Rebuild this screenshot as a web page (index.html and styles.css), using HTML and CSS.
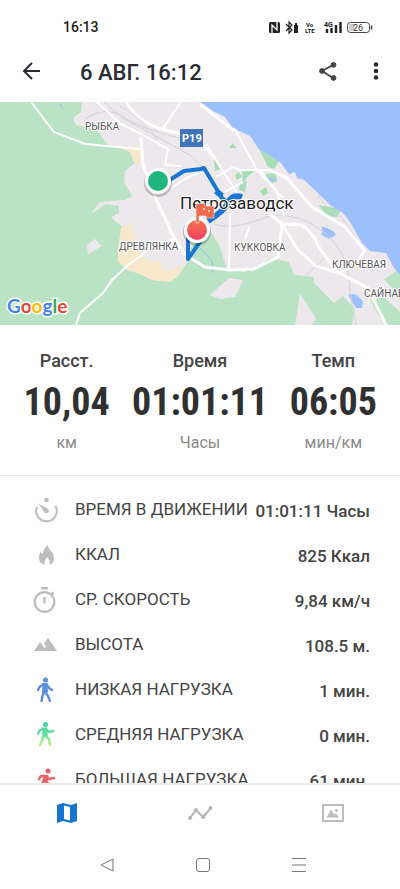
FILE: index.html
```html
<!DOCTYPE html>
<html lang="ru">
<head>
    <meta charset="UTF-8">
    <meta name="viewport" content="width=device-width, initial-scale=1.0">
    <title>Тренировка</title>
    <link rel="stylesheet" href="styles.css">
</head>
<body>

<div class="app">
    <div class="status-bar">
        <span class="clock">16:13</span>
        <svg class="status-icons" width="106" height="16" viewBox="0 0 106 16">
            <!-- nfc -->
            <rect x="1" y="3" width="11" height="11" rx="1.5" fill="#222"/>
            <path d="M4 14V6l5 5V3" fill="none" stroke="#fff" stroke-width="1.3"/>
            <!-- bluetooth -->
            <path d="M18 5l6 6-3 3V3l3 3-6 6" fill="none" stroke="#222" stroke-width="1.2"/>
            <path d="M26 6h1V4h2v2h1v8h-4z" fill="#222"/>
            <text x="38" y="8" class="status-tiny">Vo</text>
            <text x="37" y="14" class="status-tiny">LTE</text>
            <text x="56" y="8" class="status-net">4G</text>
            <path d="M59 14v-4M63.5 14V9M68 14V6M72.5 14V3" stroke="#222" stroke-width="2.4"/>
            <!-- battery -->
            <rect x="79.5" y="3.5" width="22" height="10" rx="3" fill="#fff" stroke="#444"/>
            <path d="M81 6q0-1 1-1h4v7h-4q-1 0-1-1z" fill="#ccc"/>
            <path d="M103.5 6.5v4" stroke="#444" stroke-width="1.5"/>
            <text x="85" y="12" class="status-battery">26</text>
        </svg>
    </div>

    <header class="toolbar">
        <button class="icon-btn" aria-label="Назад">
            <svg width="20" height="20" viewBox="0 0 20 20" fill="none" stroke="#2b2b33" stroke-width="2">
                <path d="M19 9H3M11 1L3 9l8 8"/>
            </svg>
        </button>
        <h1 class="title">6 АВГ. 16:12</h1>
        <button class="icon-btn" aria-label="Поделиться">
            <svg width="20" height="20" viewBox="0 0 20 20" fill="#444" stroke="#444">
                <path d="M15 3L4 9l11 7" fill="none" stroke-width="1.8"/>
                <circle cx="15.5" cy="2.9" r="2.4"/>
                <circle cx="4" cy="9" r="2.4"/>
                <circle cx="15.5" cy="16" r="2.4"/>
            </svg>
        </button>
        <button class="icon-btn more" aria-label="Ещё">
            <svg width="6" height="20" viewBox="0 0 6 20" fill="#2b2b33">
                <circle cx="3" cy="2.5" r="2.3"/>
                <circle cx="3" cy="9" r="2.3"/>
                <circle cx="3" cy="15.5" r="2.3"/>
            </svg>
        </button>
    </header>

    <svg class="map" viewBox="0 102 400 223">
        <defs>
            <linearGradient id="finish" x1="0" y1="0" x2="0" y2="1">
                <stop offset="0" stop-color="#f4734a"/>
                <stop offset="1" stop-color="#ee3f62"/>
            </linearGradient>
        </defs>
        <rect y="102" width="400" height="223" fill="#ece8ec"/>

        <!-- forest -->
        <g fill="#bae3c6">
            <path d="M0 102H82L81 112 73 118 76 125 97 130 108 145 120 148 132 153 136 162 125 171 124 182 132 196 125 200 100 202 91 214 106 204 119 206 119 213 111 217 123 228 121 240 118 250 119 262 128 270 140 274 152 280 170 282 180 274 187 262 213 268 245 272 257 266 271 258 289 262 294 275 314 277 314 283 334 303 343 296 355 309 352 325H0z"/>
            <path d="M196 232L210 230 220 247 227 270 187 264zM370 300L384 297 400 312V325H384zM384 279L397 271 400 275V296zM320 212L337 212 332 217z"/>
        </g>
        <g fill="#f7e8cc">
            <path d="M118 147L141 147 141 160 139 167 134 162 130 152zM121 228L131 223 134 232 137 246 142 256 153 262 153 280 140 274 128 270 118 262 118 250zM153 262L160 260 165 271 184 265 178 276 170 282 153 280z"/>
        </g>
        <path d="M87 245L95 239 102 246 88 254zM300 293L316 319 312 325H295zM210 295L229 278 243 280 235 297 220 299z" fill="#ece8ec"/>
        <g fill="#a9ddb8">
            <path d="M259 149L279 161 274 169 268 167zM229 148L233 143 236 148zM214 158L220 169 215 171zM242 171L256 170 247 177 243 185zM266 174L276 173 277 181 269 185 265 180zM240 184L247 181 245 192 239 190zM260 191L266 187 268 193 263 196zM235 175L239 172 242 177 237 180zM318 205L342 209 337 217 328 216z"/>
        </g>

        <!-- water -->
        <g fill="#9cc0fd">
            <path d="M200 102L213 111 225 117 233 128 250 136 259 149 272 157 281 163 289 174 295 172 297 178 304 180 318 193 330 205 343 213 350 222 362 243 370 251 386 253 394 268 400 275V102z"/>
            <path d="M322 227L327 228 333 231 336 235 329 239 322 235zM348 295Q356 291 363 302L362 308 356 308zM265 177L272 178 277 181 270 181z"/>
        </g>
        <path d="M60 104l3 5M199 247l13 14 1 12" fill="none" stroke="#8cc2e8"/>

        <!-- minor roads -->
        <g fill="none" stroke="#d5d2d9" stroke-width="1">
            <path d="M85 119Q110 104 124 119L152 134 190 155 205 170M104 102Q130 128 181 138M120 106Q146 122 158 140M214 224Q232 231 270 216 300 212 325 233T350 292L356 325M318 194Q327 211 342 218L364 250M181 150L190 137M306 275l20-18"/>
        </g>
        <!-- roads -->
        <g fill="none" stroke="#fff" stroke-width="2">
            <path d="M31 102L54 132 85 144 118 147 141 149M181 102L163 128M97 102L121 124 141 134 168 149 165 165 181 166M173 187Q190 174 202 173M206 144L240 198M216 177L233 167 240 170 270 170M225 192L243 182M234 128L257 170M257 170L283 198M76 325L80 313 103 293 112 280 128 265 149 250 175 238M230 213L229 271M261 171L276 190 284 216M245 239L250 226"/>
        </g>
        <g fill="none" stroke="#fff" stroke-width="3">
            <path d="M126 102Q140 124 165 130L195 137 214 157M141 137L143 165 156 199 173 236 185 255 205 267 229 270 254 269 278 257 282 224 270 214 282 224 302 225Q315 235 318 246L337 272M200 104L234 131M270 170L287 178 312 207 345 227 365 251M282 224L298 250 316 266 339 273 368 288 386 325M365 250L356 265 339 273"/>
        </g>

        <g class="places">
            <text x="85" y="130">РЫБКА</text>
            <text x="119" y="250">ДРЕВЛЯНКА</text>
            <text x="234" y="251">КУККОВКА</text>
            <text x="332" y="268">КЛЮЧЕВАЯ</text>
            <text x="364" y="297">САЙНАВОЛОК</text>
        </g>

        <!-- highway badge -->
        <rect x="180" y="129" width="23" height="18" fill="#3f76bb"/>
        <text x="182" y="142" class="badge">P19</text>

        <!-- route -->
        <g fill="none" stroke="#1976d2" stroke-linejoin="round">
            <path d="M168 181L184 171 201 169 204 168 222 198 228 203M188 237V259L202 239" stroke-width="4"/>
            <path d="M228 203Q232 194 242 197M216 191l6 5M228 203Q224 211 208 221" stroke-width="6"/>
        </g>
        <text x="180" y="209" class="city">Петрозаводск</text>

        <circle cx="158" cy="183" r="14" fill="#000" opacity=".2"/>
        <circle cx="158" cy="181" r="13" fill="#fff"/>
        <circle cx="158" cy="181" r="10" fill="#1fb57c"/>
        <circle cx="197" cy="232" r="14" fill="#000" opacity=".2"/>
        <circle cx="197" cy="230" r="13" fill="#fff"/>
        <circle cx="197" cy="230" r="10" fill="url(#finish)"/>
        <path d="M196 204L205 203 205 206 214 206V218H206V216H199V223H196z" fill="#ef6b4c" stroke="#fff" stroke-opacity=".5" stroke-width="1"/>
        <path d="M203 208h2v2h-2zM208 210h2v2h-2z" fill="#fbd0c0"/>

        <text x="7" y="313" class="google"><tspan fill="#4285f4">G</tspan><tspan fill="#ea4335">o</tspan><tspan fill="#fbbc05">o</tspan><tspan fill="#4285f4">g</tspan><tspan fill="#34a853">l</tspan><tspan fill="#ea4335">e</tspan></text>
    </svg>

    <section class="summary">
        <div class="metric">
            <span class="metric-name">Расст.</span>
            <span class="metric-value">10,04</span>
            <span class="metric-unit">км</span>
        </div>
        <div class="metric">
            <span class="metric-name">Время</span>
            <span class="metric-value">01:01:11</span>
            <span class="metric-unit">Часы</span>
        </div>
        <div class="metric">
            <span class="metric-name">Темп</span>
            <span class="metric-value">06:05</span>
            <span class="metric-unit">мин/км</span>
        </div>
    </section>

    <ul class="details">
        <li class="row">
            <svg class="row-icon" viewBox="0 0 26 28">
                <path d="M5 12A10.300 10.300 0 1 0 23.500 11" fill="none" stroke="#bdbdbd" stroke-width="2"/>
                <circle cx="14.500" cy="5" r="2.300"/>
                <path d="M6.500 8.500L16 14q2 2 0 3.500t-3.500 0z"/>
            </svg>
            <span class="row-name">ВРЕМЯ В ДВИЖЕНИИ</span>
            <span class="row-value">01:01:11 Часы</span>
        </li>
        <li class="row">
            <svg class="row-icon" viewBox="0 0 26 28">
                <path d="M16 5c-.5 4 6 7 6 13 0 4-2 6-5 7 2-3 0-5-2-8-1 3-4 5-2 8-4-1-6-4-6-7 0-3 1-5 2-7 0 2 1 3 2 3 0-4 2-7 5-9z"/>
            </svg>
            <span class="row-name">ККАЛ</span>
            <span class="row-value">825 Ккал</span>
        </li>
        <li class="row">
            <svg class="row-icon" viewBox="0 0 26 28">
                <circle cx="12.500" cy="17" r="9.800" fill="none" stroke="#bdbdbd" stroke-width="2.200"/>
                <path d="M9 2h7v2.500H9zM11.300 12h2.400v6.500h-2.400zM18.500 8.500l2-2 2 2-2 2z"/>
            </svg>
            <span class="row-name">СР. СКОРОСТЬ</span>
            <span class="row-value">9,84 км/ч</span>
        </li>
        <li class="row">
            <svg class="row-icon" viewBox="0 0 26 28">
                <path d="M2 21L8 12l3 4 1.500 2 1.500-1-2-3.500L16 8l9 13z"/>
            </svg>
            <span class="row-name">ВЫСОТА</span>
            <span class="row-value">108.5 м.</span>
        </li>
        <li class="row">
            <svg class="row-icon low" viewBox="0 0 26 28">
                <circle cx="13.500" cy="5" r="2.500"/>
                <path d="M11 9.500L7.500 12 6 15M15 10l2 3 3 2M11.500 17l-1 4L9.500 26M13 17l3 4 2 5" class="limb"/>
                <path d="M10.500 8h5l.5 9.500h-6z"/>
            </svg>
            <span class="row-name">НИЗКАЯ НАГРУЗКА</span>
            <span class="row-value">1 мин.</span>
        </li>
        <li class="row">
            <svg class="row-icon" viewBox="0 0 26 28">
                <defs>
                    <linearGradient id="mid" x1="0" y1="2" x2="0" y2="26" gradientUnits="userSpaceOnUse">
                        <stop offset="0" stop-color="#3fd39a"/>
                        <stop offset=".5" stop-color="#6bdca5"/>
                        <stop offset="1" stop-color="#c5f07a"/>
                    </linearGradient>
                </defs>
                <circle cx="13.500" cy="4.500" r="2.500" fill="url(#mid)"/>
                <path d="M11 9L7.500 10.500 6 14M14 9l3 3 4-1M11 16l-1 5-2 4M13 16l4 3 1 6" class="limb" stroke="url(#mid)"/>
                <path d="M10.500 7.500h4.500l1 9.500h-6z" fill="url(#mid)"/>
            </svg>
            <span class="row-name">СРЕДНЯЯ НАГРУЗКА</span>
            <span class="row-value">0 мин.</span>
        </li>
        <li class="row">
            <svg class="row-icon high" viewBox="0 0 26 28">
                <circle cx="16" cy="6" r="2.500"/>
                <path d="M13 11H9l-2 3M15 12l2 2 5-1M12 16l-3 4H5M13 16l4 3-1 5" class="limb"/>
                <path d="M12 10h4l1 4-3 4-4-2z"/>
            </svg>
            <span class="row-name">БОЛЬШАЯ НАГРУЗКА</span>
            <span class="row-value">61 мин.</span>
        </li>
    </ul>

    <nav class="tabs">
        <button class="tab" aria-label="Карта">
            <svg width="22" height="22" viewBox="0 0 22 22">
                <path d="M1 3L7 1l8 2 6-2v18l-6 2-8-2-6 2z" fill="#1673d1"/>
                <path d="M8 3.500l6 1.500v13.500L8 17z" fill="#fff"/>
            </svg>
        </button>
        <button class="tab" aria-label="Графики">
            <svg width="26" height="16" viewBox="0 0 26 16" fill="#b5b5b5">
                <path d="M3 13L9 5l7 7 8-9" fill="none" stroke="#b5b5b5" stroke-width="2"/>
                <circle cx="3" cy="13" r="2"/>
                <circle cx="9" cy="5" r="2"/>
                <circle cx="16" cy="12" r="2"/>
                <circle cx="23.500" cy="3" r="2"/>
            </svg>
        </button>
        <button class="tab" aria-label="Фото">
            <svg width="22" height="18" viewBox="0 0 22 18" fill="#bdbdbd">
                <rect x="1" y="1" width="20" height="16" fill="none" stroke="#bdbdbd" stroke-width="2"/>
                <path d="M4.500 13.500L9 5.500l3 5 2-1.500 3 4.500z"/>
                <circle cx="14.500" cy="6.500" r="1.500"/>
            </svg>
        </button>
    </nav>

    <div class="system-nav">
        <button class="icon-btn" aria-label="Назад">
            <svg width="14" height="14" viewBox="0 0 14 14" fill="none" stroke="#777">
                <path d="M13 1v12L1 7z" stroke-linejoin="round"/>
            </svg>
        </button>
        <button class="icon-btn" aria-label="Домой">
            <svg width="14" height="14" viewBox="0 0 14 14" fill="none" stroke="#777">
                <rect x=".5" y=".5" width="13" height="13" rx="2.500"/>
            </svg>
        </button>
        <button class="icon-btn" aria-label="Недавние">
            <svg width="14" height="14" viewBox="0 0 14 14" fill="none" stroke="#777">
                <path d="M0 .5h14M0 7h14M0 13.500h14"/>
            </svg>
        </button>
    </div>
</div>

</body>
</html>
```
FILE: styles.css
```css
* {
    box-sizing: border-box;
}
body {
    margin: 0;
    font-family: Roboto, "Noto Sans", sans-serif;
    background-color: #fefefe;
    color: #444;
}
button {
    padding: 0;
    background: none;
    border: none;
    cursor: pointer;
}
svg {
    display: block;
}
.app {
    display: flex;
    flex-direction: column;
    height: 100vh;
}

/* top */
.status-bar {
    display: flex;
    justify-content: space-between;
    align-items: center;
    height: 42px;
    padding: 12px 26px 0 63px;
}
.clock {
    font-size: 14px;
    font-weight: 500;
    color: #222;
}
.status-tiny {
    font-size: 6px;
    font-weight: 700;
    fill: #222;
}
.status-net {
    font-size: 7px;
    font-weight: 700;
    fill: #222;
}
.status-battery {
    font-size: 9px;
    fill: #333;
}
.toolbar {
    display: flex;
    align-items: center;
    height: 60px;
    padding: 0 21px;
}
.title {
    flex: 1;
    margin: 0 0 0 39px;
    font-size: 22px;
    font-weight: 500;
    color: #2b2b33;
}
.more {
    margin-left: 35px;
}

/* map */
.map {
    width: 100%;
    flex-shrink: 0;
}
.places {
    font-size: 10px;
    fill: #555;
    stroke: #fff;
    stroke-width: 2px;
    paint-order: stroke;
}
.badge {
    font-size: 11px;
    font-weight: 700;
    fill: #fff;
}
.city {
    font-size: 17px;
    fill: #222;
    stroke: #fff;
    stroke-width: 2px;
    paint-order: stroke;
}
.google {
    font-family: Lato, sans-serif;
    font-size: 19px;
    font-weight: 700;
    stroke: #fff;
    stroke-width: 3px;
    paint-order: stroke;
}

/* summary */
.summary {
    display: grid;
    grid-template-columns: repeat(3, minmax(0, 1fr));
    padding: 24px 0 20px;
    border-bottom: 1px solid #e8e8e8;
}
.metric {
    display: flex;
    flex-direction: column;
    align-items: center;
}
.metric-name {
    font-size: 18px;
    font-weight: 500;
    line-height: 24px;
}
.metric-value {
    font-family: "Roboto Condensed", "Liberation Sans Narrow", Roboto, sans-serif;
    font-size: 38px;
    font-weight: 700;
    line-height: 58px;
    color: #2f3032;
}
.metric-unit {
    font-size: 16px;
    line-height: 24px;
    color: #8a8a8a;
}

/* details */
.details {
    flex: 1;
    min-height: 0;
    margin: 0;
    padding: 10px 30px 0 32px;
    overflow: hidden;
    list-style: none;
}
.row {
    display: flex;
    align-items: center;
    height: 45px;
}
.row-icon {
    width: 26px;
    height: 28px;
    margin-right: 17px;
    fill: #bdbdbd;
}
.limb {
    fill: none;
    stroke-width: 2.4px;
    stroke-linecap: round;
    stroke-linejoin: round;
}
.low {
    fill: #5b8fdb;
    stroke: #5b8fdb;
    stroke-width: 0;
}
.high {
    fill: #e5645f;
    stroke: #e5645f;
    stroke-width: 0;
}
.row-name {
    flex: 1;
    font-size: 17px;
}
.row-value {
    padding-top: 5px;
    font-size: 17px;
    font-weight: 500;
}

/* bottom */
.tabs {
    display: grid;
    grid-template-columns: repeat(3, 1fr);
    height: 57px;
    border-top: 2px solid #ececec;
}
.tab {
    display: flex;
    justify-content: center;
    align-items: center;
}
.system-nav {
    display: flex;
    justify-content: center;
    gap: 82px;
    height: 49px;
    padding-left: 6px;
}
```
